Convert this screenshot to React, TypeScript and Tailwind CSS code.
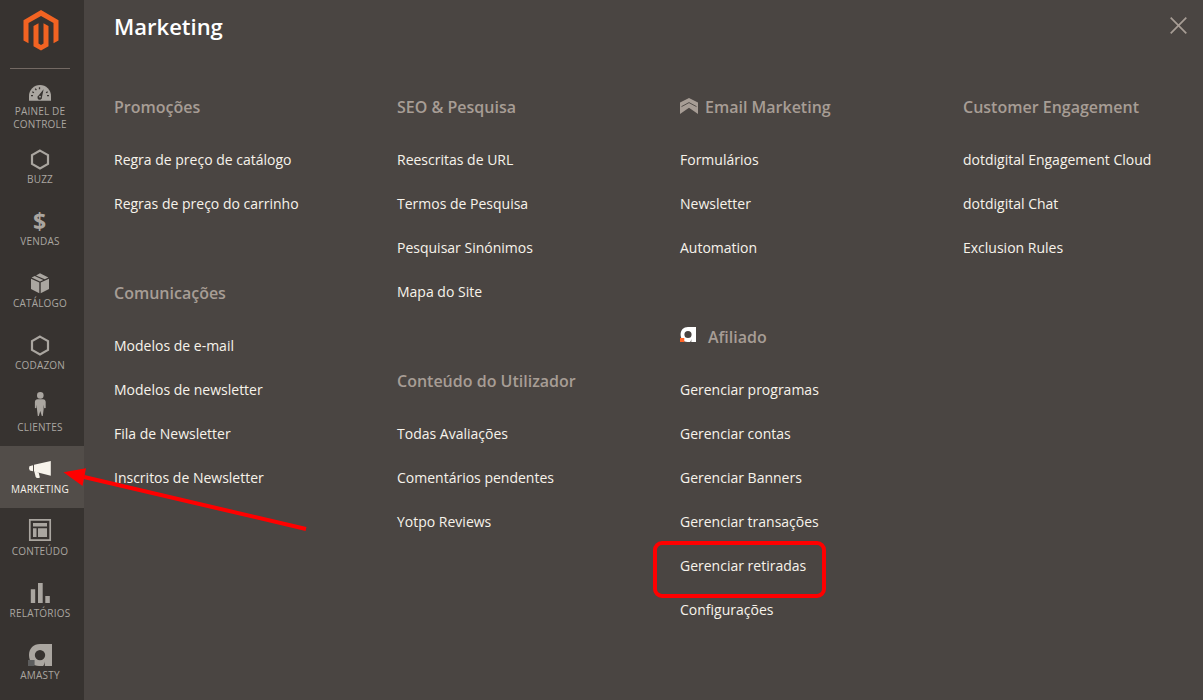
import React from "react";

type Group = { title: string; items: string[]; icon?: React.ReactNode };

const Hexagon = () => (
  <path d="M12 2.6 20 7.1V15.9L12 20.4 4 15.9V7.1Z" fill="none" stroke="currentColor" strokeWidth="2.2" />
);

const menu: { label: string; active?: boolean; icon: React.ReactNode }[] = [
  {
    label: "Painel de controle",
    icon: (
      <>
        <path d="M1 19.7V15a11 11 0 0 1 22 0v4.7Z" fill="currentColor" />
        <path d="M15.6 8.2 14 16a2.3 2.3 0 1 1-3.2-1.7Z" fill="#373330" />
        <circle cx="12" cy="15.7" r="0.9" fill="currentColor" />
        <path d="M3 14.6h2M4.3 10.8l1.6 1M7.2 7.6l1.2 1.5M11.5 6.2v2M19.7 10.8l-1.6 1M21 14.6h-2" stroke="#373330" strokeWidth="1.3" />
      </>
    ),
  },
  { label: "Buzz", icon: <Hexagon /> },
  {
    label: "Vendas",
    icon: (
      <text x="11.5" y="20" textAnchor="middle" fill="currentColor" className="font-['Open_Sans',sans-serif] text-[23px] font-bold">
        $
      </text>
    ),
  },
  {
    label: "Catálogo",
    icon: (
      <g fill="currentColor">
        <path d="M3 6.8 11.3 10.6V21.3L3 17ZM21 6.8 12.7 10.6V21.3L21 17Z" />
        <path d="M3.6 5.5 6.7 4 15.3 7.9 12 9.4ZM8 3.4 12 1.2 20.4 5.5 16.8 7.2Z" />
      </g>
    ),
  },
  { label: "Codazon", icon: <Hexagon /> },
  {
    label: "Clientes",
    icon: (
      <g fill="currentColor">
        <circle cx="12.3" cy="-0.6" r="3.3" />
        <path d="M9.6 3.3h5.4c1.6 0 2.7 1.2 2.7 2.8v5.8l-1.5.3-.6-3.5v4.8L14.8 20h-1l-1.5-4.9L10.8 20h-1L9 13.5V8.7l-.6 3.5-1.5-.3V6.1c0-1.6 1.1-2.8 2.7-2.8Z" />
      </g>
    ),
  },
  {
    label: "Marketing",
    active: true,
    icon: (
      <g fill="currentColor">
        <path d="M5 7.2v6L1.8 12.4 1 10.5l.4-2.2ZM6 6.8 22.8 3v14.7L6 13.5Z" />
        <path d="m6.3 13.2 4.3 1.2 1.3 5.1c-1.9.9-3.8.6-4.3-.7Z" />
      </g>
    ),
  },
  {
    label: "Conteúdo",
    icon: (
      <>
        <path d="M1.8-.2h20.4v20.4H1.8Z" fill="none" stroke="currentColor" strokeWidth="1.7" />
        <path d="M5 3h14v3.5H5ZM5 8.2h3.5v8.8H5ZM10 8.2h9v8.8h-9Z" fill="currentColor" />
      </>
    ),
  },
  {
    label: "Relatórios",
    icon: <path d="M2.8 7.3h4.4V21H2.8ZM10 1h4.7v20H10ZM17.3 14h4.5v7h-4.5Z" fill="currentColor" />,
  },
  {
    label: "Amasty",
    icon: (
      <>
        <path
          fillRule="evenodd"
          d="M24 0v22H11c-6 0-10-4.5-10-11S5.5 0 12 0ZM12 5.9a5.2 5.2 0 1 0 0 10.4 5.2 5.2 0 0 0 0-10.4Z"
          fill="currentColor"
        />
        <path d="M16.8 17.5V22h-1.6c.9-1.2 1.4-2.8 1.6-4.5Z" fill="#373330" />
        <path d="M0 16h6.6v6H0Z" fill="#5d5e5e" />
      </>
    ),
  },
];

const columns: Group[][] = [
  [
    { title: "Promoções", items: ["Regra de preço de catálogo", "Regras de preço do carrinho"] },
    {
      title: "Comunicações",
      items: ["Modelos de e-mail", "Modelos de newsletter", "Fila de Newsletter", "Inscritos de Newsletter"],
    },
  ],
  [
    { title: "SEO & Pesquisa", items: ["Reescritas de URL", "Termos de Pesquisa", "Pesquisar Sinónimos", "Mapa do Site"] },
    { title: "Conteúdo do Utilizador", items: ["Todas Avaliações", "Comentários pendentes", "Yotpo Reviews"] },
  ],
  [
    {
      title: "Email Marketing",
      items: ["Formulários", "Newsletter", "Automation"],
      icon: (
        <svg className="mr-[7px] mb-[2px] h-4 w-[18px]" viewBox="0 0 18 16">
          <path d="M9 0 18 4.6V16L9 9.8 0 16V4.6Z" fill="#a79d95" />
          <path d="M1.5 8.6 9 4.6l7.5 4" fill="none" stroke="#4a4542" strokeWidth="0.9" />
        </svg>
      ),
    },
    {
      title: "Afiliado",
      items: [
        "Gerenciar programas",
        "Gerenciar contas",
        "Gerenciar Banners",
        "Gerenciar transações",
        "Gerenciar retiradas",
        "Configurações",
      ],
      icon: (
        <svg className="mr-3 mb-[5px] h-[15px] w-4" viewBox="0 0 16 15">
          <path
            fillRule="evenodd"
            d="M16 0v15H7.5C3.3 15 .6 12 .6 7.5S3.5 0 8 0ZM8 3.9a3.6 3.6 0 1 0 0 7.2 3.6 3.6 0 0 0 0-7.2Z"
            fill="#fff"
          />
          <path d="M11.3 12v3h-1.1c.6-.8 1-1.9 1.1-3Z" fill="#4a4542" />
          <path d="M0 11h4.3v4H0Z" fill="#ff6427" />
        </svg>
      ),
    },
  ],
  [{ title: "Customer Engagement", items: ["dotdigital Engagement Cloud", "dotdigital Chat", "Exclusion Rules"] }],
];

function Sidebar() {
  return (
    <nav className="w-[84px] shrink-0 bg-[#373330]">
      <div className="flex h-[68px] w-[81px] justify-center pt-[10px]">
        <svg className="h-[41px] w-9" viewBox="0 0 36 41" fill="#f26322">
          <path d="M18 0 35.5 10.2V30.4L30.5 33.3V13.1L18 5.9 5.5 13.1V33.3L.5 30.4V10.2Z" />
          <path d="M15.5 13.2V33.4L18 35 20.5 33.4V13.2L25.5 16V36.2L18 40.6 10.5 36.2V16Z" />
        </svg>
      </div>
      <div className="mx-[10px] h-px w-[60px] bg-[#736963]" />
      {menu.map((m, i) => (
        <a
          key={m.label}
          className={`flex flex-col pt-3 ${i === 0 ? "h-[67px]" : "h-[62px] gap-px"} ${
            m.active ? "bg-[#524d49] text-[#f7f3eb]" : "text-[#aaa6a0]"
          }`}
        >
          <svg className="ml-7 h-6 w-6 overflow-visible" viewBox="0 0 24 24">
            {m.icon}
          </svg>
          <span className="w-20 px-1 text-center text-[10px] leading-[13px] tracking-[0.2px] uppercase">{m.label}</span>
        </a>
      ))}
    </nav>
  );
}

export default function App() {
  return (
    <div className="relative flex h-[700px] w-full overflow-hidden bg-[#4a4542] font-['Open_Sans',sans-serif]">
      <Sidebar />
      <main className="min-w-0 flex-1 pl-[30px]">
        <header className="flex h-24 items-start justify-between pr-4">
          <h1 className="pt-[11px] text-[22px] leading-[30px] font-semibold text-white">Marketing</h1>
          <svg className="mt-[17px] h-[17px] w-[17px]" viewBox="0 0 17 17">
            <path d="M.7.7 16.3 16.3M16.3.7.7 16.3" stroke="#a79d95" strokeWidth="1.7" />
          </svg>
        </header>
        <div className="grid grid-cols-[repeat(4,283px)]">
          {columns.map((groups, c) => (
            <div key={c} className="flex flex-col gap-14">
              {groups.map((g) => (
                <section key={g.title}>
                  <h2 className="mb-5 flex h-[22px] items-center text-[16px] leading-[22px] font-semibold text-[#a79d95]">
                    {g.icon}
                    {g.title}
                  </h2>
                  <ul>
                    {g.items.map((item) => (
                      <li key={item} className="flex h-11 items-center text-sm whitespace-nowrap text-[#f7f3eb]">
                        {item}
                      </li>
                    ))}
                  </ul>
                </section>
              ))}
            </div>
          ))}
        </div>
      </main>
      <div className="absolute top-[541px] left-[653px] h-[57px] w-[173px] rounded-[9px] border-4 border-[#ff0000]" />
      <svg className="absolute top-[460px] left-[60px] h-20 w-[260px]" viewBox="60 460 260 80">
        <path d="M84 477 306 529" stroke="#ff0000" strokeWidth="4" />
        <path d="M63.5 472.3 86 468.3 82.5 486Z" fill="#ff0000" />
      </svg>
    </div>
  );
}
